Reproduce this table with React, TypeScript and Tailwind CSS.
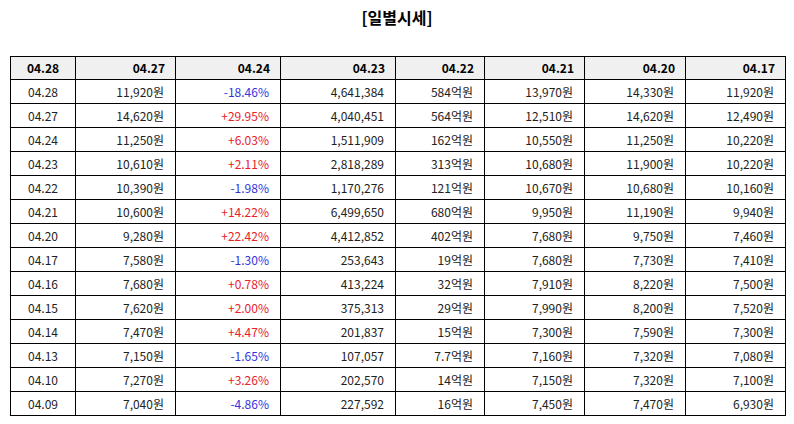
import React from "react";

const headers = ["04.28", "04.27", "04.24", "04.23", "04.22", "04.21", "04.20", "04.17"];
const widths = ["w-[65px]", "w-[100px]", "w-[105px]", "w-[115px]", "w-[89px]", "w-[100px]", "w-[101px]", "w-[100px]"];

const rows: string[][] = [
  ["04.28", "11,920원", "-18.46%", "4,641,384", "584억원", "13,970원", "14,330원", "11,920원"],
  ["04.27", "14,620원", "+29.95%", "4,040,451", "564억원", "12,510원", "14,620원", "12,490원"],
  ["04.24", "11,250원", "+6.03%", "1,511,909", "162억원", "10,550원", "11,250원", "10,220원"],
  ["04.23", "10,610원", "+2.11%", "2,818,289", "313억원", "10,680원", "11,900원", "10,220원"],
  ["04.22", "10,390원", "-1.98%", "1,170,276", "121억원", "10,670원", "10,680원", "10,160원"],
  ["04.21", "10,600원", "+14.22%", "6,499,650", "680억원", "9,950원", "11,190원", "9,940원"],
  ["04.20", "9,280원", "+22.42%", "4,412,852", "402억원", "7,680원", "9,750원", "7,460원"],
  ["04.17", "7,580원", "-1.30%", "253,643", "19억원", "7,680원", "7,730원", "7,410원"],
  ["04.16", "7,680원", "+0.78%", "413,224", "32억원", "7,910원", "8,220원", "7,500원"],
  ["04.15", "7,620원", "+2.00%", "375,313", "29억원", "7,990원", "8,200원", "7,520원"],
  ["04.14", "7,470원", "+4.47%", "201,837", "15억원", "7,300원", "7,590원", "7,300원"],
  ["04.13", "7,150원", "-1.65%", "107,057", "7.7억원", "7,160원", "7,320원", "7,080원"],
  ["04.10", "7,270원", "+3.26%", "202,570", "14억원", "7,150원", "7,320원", "7,100원"],
  ["04.09", "7,040원", "-4.86%", "227,592", "16억원", "7,450원", "7,470원", "6,930원"],
];

export default function App() {
  return (
    <div
      className="w-[794px] h-[424px] bg-white text-[#222]"
      style={{ fontFamily: '"Noto Sans CJK KR", "Noto Sans", sans-serif' }}
    >
      <div className="h-[56px] pt-[5px] text-center text-[16px] font-bold leading-[24px] text-black">
        [일별시세]
      </div>
      <div className="px-[10px]">
        <table className="w-[775px] border-collapse table-fixed text-[12px]">
          <colgroup>
            {widths.map((w, i) => (
              <col key={i} className={w} />
            ))}
          </colgroup>
          <thead>
            <tr className="h-[23px] bg-[#f0f0f0]">
              {headers.map((h, i) => (
                <th
                  key={i}
                  className={`border border-black p-0 font-bold leading-none text-black ${
                    i === 0 ? "text-center" : "text-right pr-[10px]"
                  }`}
                >
                  {h}
                </th>
              ))}
            </tr>
          </thead>
          <tbody>
            {rows.map((r, ri) => (
              <tr key={ri} className="h-[24px]">
                {r.map((c, ci) => {
                  let color = "text-[#222]";
                  if (ci === 2) color = c.startsWith("-") ? "text-[#3333dd]" : "text-[#e8222a]";
                  return (
                    <td
                      key={ci}
                      className={`border border-black p-0 leading-none ${color} ${
                        ci === 0 ? "text-center" : "text-right pr-[11px]"
                      }`}
                    >
                      {c}
                    </td>
                  );
                })}
              </tr>
            ))}
          </tbody>
        </table>
      </div>
    </div>
  );
}
